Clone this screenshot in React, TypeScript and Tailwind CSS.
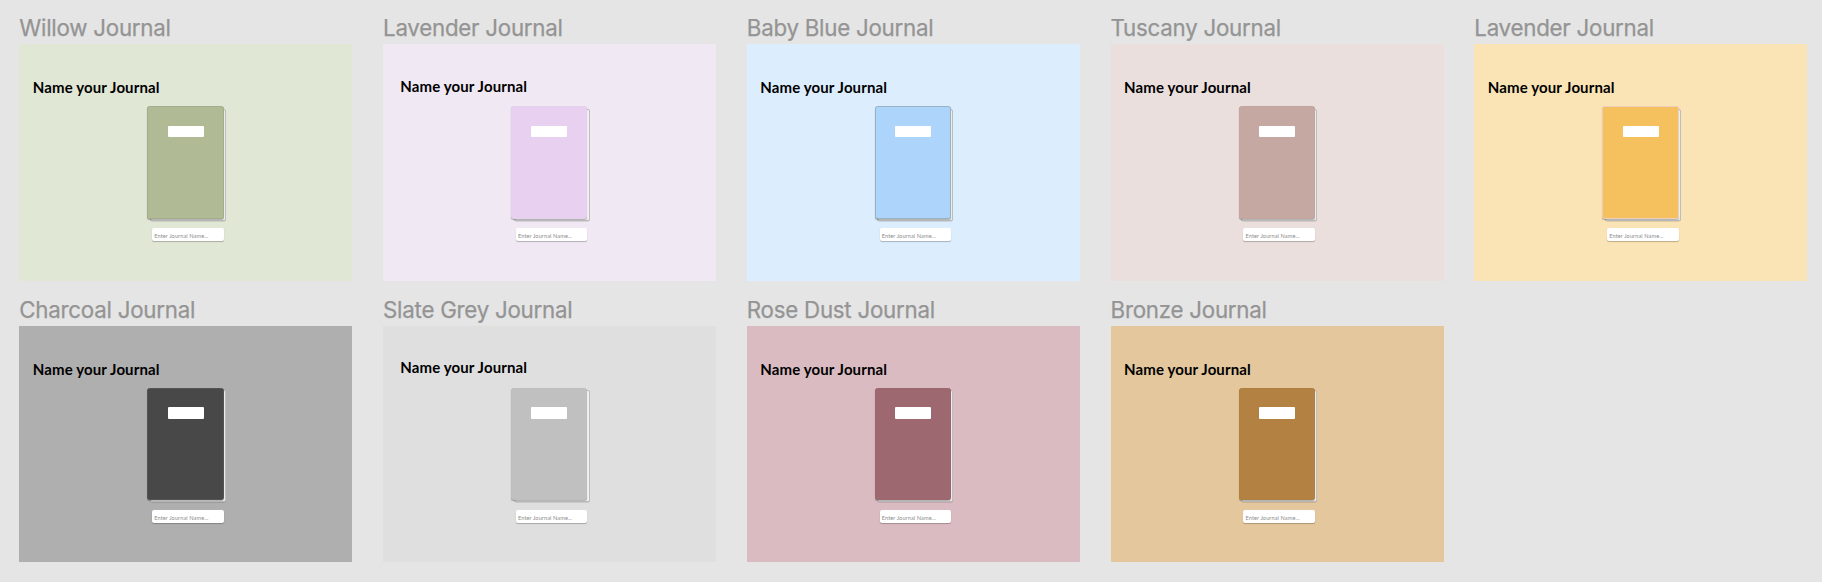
type Journal = {
  title: string;
  page: string;
  cover: string;
  heading?: string;
};

const journals: Journal[] = [
  { title: "Willow Journal", page: "bg-[#e0e7d5]", cover: "bg-[#b0ba95] border-[#a3ad8b]" },
  { title: "Lavender Journal", page: "bg-[#f0e8f3]", cover: "bg-[#e8d1f0] border-[#e5cfec]", heading: "pl-[17.3px] leading-[20.6px]" },
  { title: "Baby Blue Journal", page: "bg-[#dcedfd]", cover: "bg-[#add4fb] border-[#98b3bf]" },
  { title: "Tuscany Journal", page: "bg-[#ebdfdd]", cover: "bg-[#c5a8a1] border-[#c2a59e]" },
  { title: "Lavender Journal", page: "bg-[#fae4b5]", cover: "bg-[#f5c15e] border-[#ecd0bb]" },
  { title: "Charcoal Journal", page: "bg-[#afafaf]", cover: "bg-[#484848] border-[#545454]" },
  { title: "Slate Grey Journal", page: "bg-[#dfdfdf]", cover: "bg-[#c0c0c0] border-[#bebebe]", heading: "pl-[17.3px] leading-[19.4px]" },
  { title: "Rose Dust Journal", page: "bg-[#dbbbc2]", cover: "bg-[#9e6870] border-[#9c666f]" },
  { title: "Bronze Journal", page: "bg-[#e4c79d]", cover: "bg-[#b38242] border-[#b08042]" },
];

function Book({ cover }: { cover: string }) {
  return (
    <div className="relative ml-[128.2px] mt-[10px] h-[114.7px] w-[79px]">
      <div className="absolute left-[2.4px] top-[2.5px] h-[112.4px] w-[76px] rounded-[2px] border border-[#bdbdbd] bg-[#f3f3f3] shadow-[0_0.5px_0.5px_rgba(0,0,0,0.2)]" />
      <div className={`relative flex h-[112.9px] w-[76.2px] justify-center rounded-[2.5px] border pt-[18.6px] shadow-[0_1px_1px_rgba(0,0,0,0.28)] ${cover}`}>
        <div className="h-[11.4px] w-[36px] rounded-[1px] bg-white" />
      </div>
    </div>
  );
}

function Frame({ title, page, cover, heading = "pl-[13.5px] leading-[22px]" }: Journal) {
  return (
    <section className="w-[333px]">
      <h2 className="h-[33px] whitespace-nowrap font-[Inter,sans-serif] text-[22.3px] leading-[33px] tracking-[-0.24px] text-[#949494] [-webkit-text-stroke:0.25px_#949494]">{title}</h2>
      <div className={`h-[236.7px] pt-[32px] ${page}`}>
        <p className={`h-[20px] whitespace-nowrap font-[Lato,sans-serif] text-[15px] font-bold tracking-[0.12px] text-black ${heading}`}>Name your Journal</p>
        <Book cover={cover} />
        <div className="ml-[132.9px] mt-[7.3px] h-[13px] w-[71.4px] rounded-[2px] bg-white pl-[2.1px] pt-[2px] shadow-[0_1px_1px_rgba(0,0,0,0.25)]">
          <span className="block whitespace-nowrap font-[Lato,sans-serif] text-[5.6px] leading-[12px] tracking-[0.1px] text-[#8c8c8c]">Enter Journal Name...</span>
        </div>
      </div>
    </section>
  );
}

export default function App() {
  return (
    <main className="grid h-[582px] w-[1822px] grid-cols-[repeat(5,333px)] content-start gap-x-[30.75px] gap-y-[11.7px] overflow-hidden bg-[#e5e5e5] pl-[19.3px] pt-[11.2px]">
      {journals.map((journal, index) => (
        <Frame key={index} {...journal} />
      ))}
    </main>
  );
}
